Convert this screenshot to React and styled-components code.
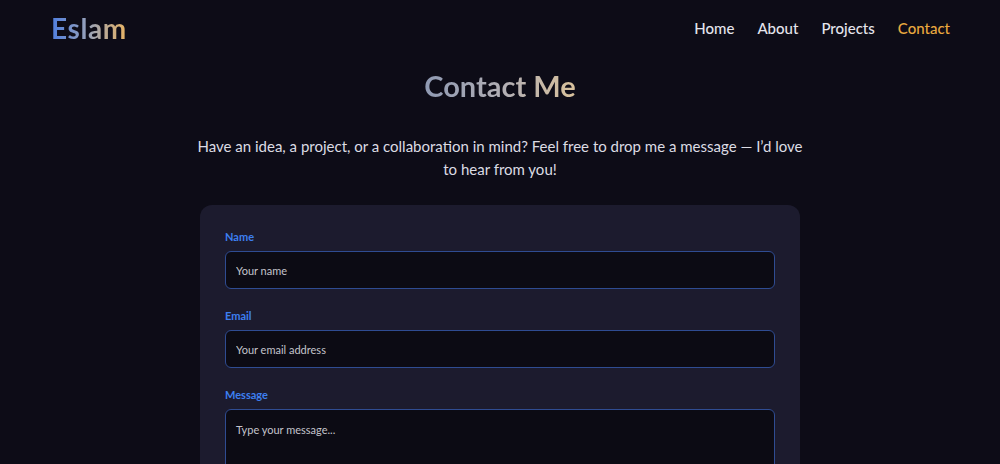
import React from 'react'
import styled, { createGlobalStyle } from 'styled-components'

const GlobalStyle = createGlobalStyle`
*{box-sizing:border-box;}
body{
  margin:0;
  background:#0d0c17;
  font-family:"Trebuchet MS","Lato","Open Sans",sans-serif;
  color:#e6e6ee;
}
`;

const Header = styled.header`
  display:flex;
  align-items:center;
  justify-content:space-between;
  height:56px;
  padding:0 50px 0 51px;
`;

const Logo = styled.div`
  font-size:28px;
  font-weight:700;
  letter-spacing:0.6px;
  background:linear-gradient(90deg,#4f7fe0 0%,#9aa3b8 50%,#e9b463 100%);
  -webkit-background-clip:text;
  background-clip:text;
  color:transparent;
`;

const Nav = styled.nav`
  display:flex;
  gap:23px;
`;

const NavLink = styled.a`
  font-size:15px;
  font-weight:500;
  color:${p => (p.$active ? '#e9a93f' : '#e4e4ec')};
  text-decoration:none;
`;

const Section = styled.section`
  display:flex;
  flex-direction:column;
  align-items:center;
  padding-top:12px;
`;

const Title = styled.h1`
  margin:0;
  font-size:29px;
  font-weight:700;
  line-height:36px;
  background:linear-gradient(90deg,#8f9ab3 0%,#b4b0b4 55%,#d9c29c 100%);
  -webkit-background-clip:text;
  background-clip:text;
  color:transparent;
`;

const Intro = styled.p`
  margin:31px 0 0;
  width:610px;
  text-align:center;
  font-size:15px;
  line-height:23px;
  color:#dcdce4;
`;

const Card = styled.form`
  margin-top:24px;
  width:600px;
  background:#1c1b2e;
  border-radius:12px;
  padding:25px 25px 30px;
  display:flex;
  flex-direction:column;
  gap:20px;
`;

const Field = styled.div`
  display:flex;
  flex-direction:column;
  gap:8px;
`;

const Label = styled.label`
  font-size:11px;
  font-weight:700;
  color:#3d7ff0;
`;

const inputStyles = `
  width:100%;
  background:#0c0b14;
  border:1px solid #2f4c92;
  border-radius:6px;
  padding:0 10px;
  font-family:inherit;
  font-size:11px;
  color:#e4e4ec;
  outline:none;
  &::placeholder{color:#c4c4cc;}
`;

const Input = styled.input`
  ${inputStyles}
  height:38px;
`;

const TextArea = styled.textarea`
  ${inputStyles}
  height:110px;
  padding-top:13px;
  resize:none;
`;

export default function App() {
  return (
    <>
      <GlobalStyle />
      <Header>
        <Logo>Eslam</Logo>
        <Nav>
          <NavLink href="#">Home</NavLink>
          <NavLink href="#">About</NavLink>
          <NavLink href="#">Projects</NavLink>
          <NavLink href="#" $active>Contact</NavLink>
        </Nav>
      </Header>
      <Section>
        <Title>Contact Me</Title>
        <Intro>
          Have an idea, a project, or a collaboration in mind? Feel free to drop me a message — I’d love to hear from you!
        </Intro>
        <Card onSubmit={e => e.preventDefault()}>
          <Field>
            <Label htmlFor="name">Name</Label>
            <Input id="name" type="text" placeholder="Your name" />
          </Field>
          <Field>
            <Label htmlFor="email">Email</Label>
            <Input id="email" type="email" placeholder="Your email address" />
          </Field>
          <Field>
            <Label htmlFor="message">Message</Label>
            <TextArea id="message" placeholder="Type your message..." />
          </Field>
        </Card>
      </Section>
    </>
  )
}
